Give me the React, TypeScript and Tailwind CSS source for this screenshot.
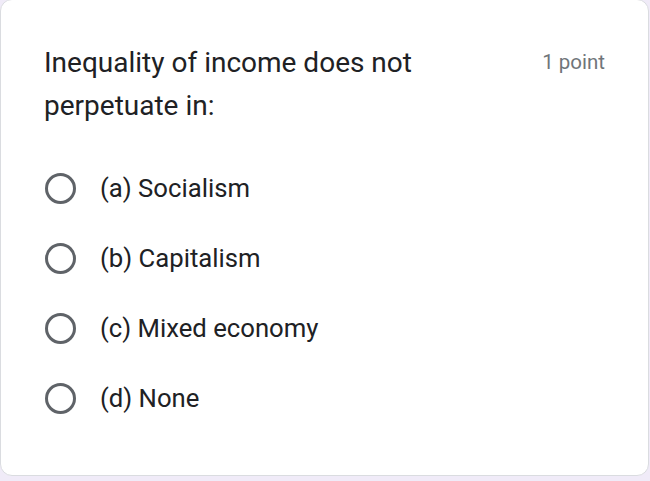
import React from "react";

const options = ["(a) Socialism", "(b) Capitalism", "(c) Mixed economy", "(d) None"];

export default function App() {
  return (
    <div className="w-[650px] h-[481px] bg-[#f0ebf8] overflow-hidden" style={{ fontFamily: "Roboto, 'Noto Sans', sans-serif" }}>
      <div className="w-[649px] h-[477px] -mt-[1px] bg-white rounded-[12px] border border-[#dadce0] pl-[43px] pr-[43px] pt-[41px]">
        <div className="flex justify-between items-start">
          <div className="text-[28px] leading-[43px] text-[#202124] w-[440px]">
            Inequality of income does not perpetuate in:
          </div>
          <div className="text-[20.5px] leading-[43px] text-[#70757a]">1 point</div>
        </div>
        <div className="mt-[43px] flex flex-col gap-[34px]">
          {options.map((o) => (
            <div key={o} className="flex items-center h-[36px]">
              <div className="w-[31px] h-[31px] rounded-full border-[3px] border-[#5f6368] ml-[1px]" />
              <span className="ml-[24px] text-[25.7px] text-[#202124]">{o}</span>
            </div>
          ))}
        </div>
      </div>
    </div>
  );
}
